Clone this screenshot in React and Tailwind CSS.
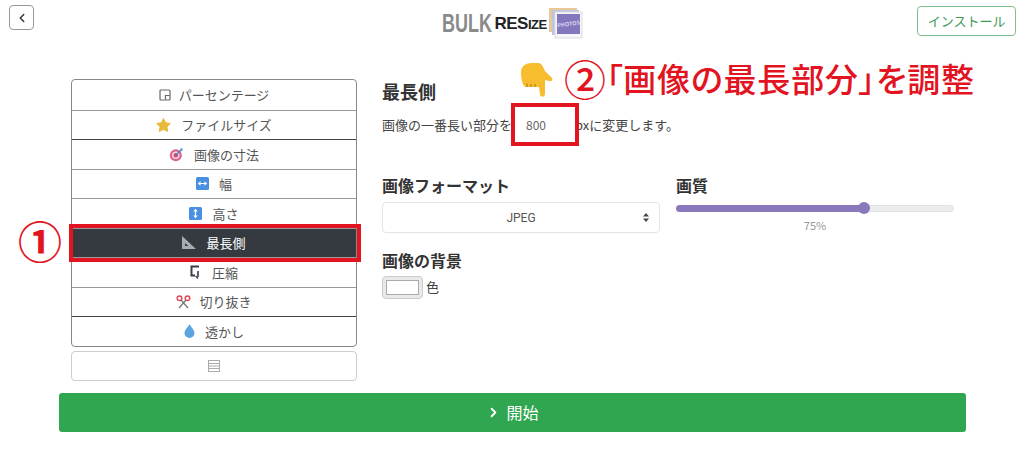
import React from 'react';
import { ChevronLeft, ChevronRight } from 'lucide-react';

const FONT = "font-['Noto_Sans_CJK_JP','Noto_Sans',sans-serif]";

function Percent() {
    return (
        <svg width="12" height="12" viewBox="0 0 12 12" fill="none" stroke="#666" strokeWidth="1.2">
            <rect x="1" y="1" width="10" height="10" rx="1" />
            <path d="M6.5 10.5V6.5H10.5" />
        </svg>
    );
}

function Star() {
    return (
        <svg width="15" height="14" viewBox="0 0 16 15">
            <path d="M8 .5l2.300 4.600 5 .7-3.600 3.600.9 5.100L8 12.200l-4.600 2.300.9-5.100L.7 5.800l5-.7z" fill="#e8b93a" stroke="#e8b93a" strokeLinejoin="round" />
        </svg>
    );
}

function Target() {
    return (
        <svg width="15" height="15" viewBox="0 0 15 15">
            <circle cx="6.800" cy="8.200" r="6" fill="#d9648f" />
            <circle cx="6.800" cy="8.200" r="3.800" fill="#f3d5e0" />
            <circle cx="6.800" cy="8.200" r="2.200" fill="#c9487a" />
            <path d="M7 8L12 3" stroke="#4d7fb8" strokeWidth="1.3" />
            <path d="M11 1.200l3 .6-1.500 2.800z" fill="#4a90e2" />
        </svg>
    );
}

function BlueBox({ vertical }) {
    return (
        <svg width="13" height="13" viewBox="0 0 13 13">
            <rect width="13" height="13" rx="1.5" fill="#4a90e2" />
            <g transform={vertical ? 'rotate(90 6.5 6.5)' : undefined} fill="#fff" stroke="#fff">
                <path d="M4 6.500h5" strokeWidth="1.2" />
                <path d="M1.800 6.500L4.500 4.300v4.400zM11.200 6.500L8.500 4.300v4.400z" stroke="none" />
            </g>
        </svg>
    );
}

function SetSquare() {
    return (
        <svg width="14" height="13" viewBox="0 0 14 13">
            <path fillRule="evenodd" d="M0 0L14 13H0zM3 7v3h3.400z" fill="#a9abb2" />
        </svg>
    );
}

function Compress() {
    return (
        <svg width="10" height="14" viewBox="0 0 10 14" fill="none" stroke="#3a3d48" strokeWidth="2">
            <path d="M9 1.500H1.500v9H5" />
            <path d="M8 6v6" strokeWidth="1.6" />
            <path d="M5.500 11l2.500 2.500" strokeWidth="1.2" />
        </svg>
    );
}

function Scissors() {
    return (
        <svg width="15" height="14" viewBox="0 0 15 14" fill="none" stroke="#dd4a58" strokeWidth="1.5">
            <circle cx="3.500" cy="3.200" r="2.300" />
            <circle cx="11.500" cy="3.200" r="2.300" />
            <path d="M5 5l7 8M10 5l-7 8" stroke="#777" strokeWidth="1.3" />
        </svg>
    );
}

function Drop() {
    return (
        <svg width="11" height="14" viewBox="0 0 11 14">
            <path d="M5.500 0C4 3 .5 6 .5 9a5 5 0 0 0 10 0c0-3-3.500-6-5-9z" fill="#5aa5e0" />
        </svg>
    );
}

function Rows() {
    return (
        <svg width="12" height="12" viewBox="0 0 12 12" fill="none" stroke="#aaa">
            <rect x=".5" y=".5" width="11" height="11" />
            <path d="M.5 3.500h11M.5 6h11M.5 8.500h11" />
        </svg>
    );
}

function Hand() {
    return (
        <svg width="34" height="36" viewBox="0 0 34 36">
            <path d="M1 10C1 4 6 1 12 1h6c4 0 5 4 7 8l6 6c2.500 2 1.500 5-2 4l-4-1v14c0 3.500-5 3.500-5 0l-1-7H5C2 22 1 16 1 10z" fill="#f7bd2e" />
            <path d="M7 21.500v3.500M11 22v3M15 22v3" stroke="#b07a10" strokeWidth="1" />
        </svg>
    );
}

function LogoPhotos() {
    return (
        <svg width="34" height="31" viewBox="0 0 34 31">
            <rect x="0" y="0" width="28" height="24" fill="#e9c796" />
            <rect x="3" y="2" width="27" height="25" fill="#b9c6e0" />
            <rect x="6" y="4" width="27" height="26" fill="#f6f6fa" stroke="#ddd" />
            <rect x="8" y="6" width="23" height="20" fill="#8577bd" />
            <text x="19.500" y="18" textAnchor="middle" fontSize="5.500" fontWeight="700" fill="#d8d4ee" transform="rotate(-8 19.500 16)">PHOTOS</text>
        </svg>
    );
}

const items = [
    { label: 'パーセンテージ', icon: <Percent />, gap: 'gap-2' },
    { label: 'ファイルサイズ', icon: <Star />, gap: 'gap-2.5' },
    { label: '画像の寸法', icon: <Target />, gap: 'gap-2.5', dark: true },
    { label: '幅', icon: <BlueBox />, gap: 'gap-2.5' },
    { label: '高さ', icon: <BlueBox vertical />, gap: 'gap-2.5' },
    { label: '最長側', icon: <SetSquare />, gap: 'gap-2.5', active: true },
    { label: '圧縮', icon: <Compress />, gap: 'gap-3' },
    { label: '切り抜き', icon: <Scissors />, gap: 'gap-2' },
    { label: '透かし', icon: <Drop />, gap: 'gap-2.5', dark: true },
];

export default function App() {
    return (
        <div className={`relative w-[1024px] h-[453px] overflow-hidden bg-white text-[#444] ${FONT}`}>
            {/* Header */}
            <header className="flex items-start h-[79px] pl-[9px] pr-2 pt-[5px]">
                <div className="flex-1">
                    <button className="flex items-center justify-center w-[25px] h-[25px] rounded border border-[#999] text-[#333]">
                        <ChevronLeft size={14} strokeWidth={2.5} />
                    </button>
                </div>
                <div className="flex items-center h-[38px] -mt-px">
                    <span className="w-[49px] origin-left scale-x-[0.72] font-['Liberation_Sans',sans-serif] font-bold text-[25px] leading-none text-[#8a8a8a]">BULK</span>
                    <span className="ml-[3px] font-['Liberation_Sans',sans-serif] font-bold text-[17px] leading-none text-[#222] tracking-[-0.5px]">RES</span>
                    <span className="font-['Liberation_Sans',sans-serif] font-bold text-[13px] leading-none text-[#222] tracking-[-0.5px] mt-[3px]">IZE</span>
                    <span className="ml-[2px]"><LogoPhotos /></span>
                </div>
                <div className="flex-1 flex justify-end">
                    <button className="mt-px w-[99px] h-[30px] rounded border border-[#7fbf8e] text-[13px] text-[#3c9a55]">インストール</button>
                </div>
            </header>

            {/* Main */}
            <main className="flex pl-[71px]">
                <div className="w-[286px] shrink-0">
                    <div className="rounded border border-[#888] overflow-hidden">
                        {items.map((item, i) => (
                            <div
                                key={item.label}
                                className={`flex items-center justify-center h-[29.5px] text-[13px] ${item.gap} ${i > 0 ? 'border-t' : ''} ${item.dark ? 'border-[#444]' : 'border-[#999]'} ${item.active ? 'bg-[#343a40] text-white' : 'text-[#555]'}`}
                            >
                                {item.icon}
                                <span>{item.label}</span>
                            </div>
                        ))}
                    </div>
                    <div className="flex items-center justify-center h-[30px] mt-[4px] rounded border border-[#ccc]">
                        <Rows />
                    </div>
                </div>

                <div className="ml-[25px] w-[572px]">
                    <h2 className="text-[18px] leading-[24px] font-bold text-[#333]">最長側</h2>
                    <div className="flex items-center mt-[11px] h-[22px] text-[13px] whitespace-nowrap">
                        <span>画像の一番長い部分を</span>
                        <span className="w-[63px] h-[32px] pl-[14px] flex items-center text-[12px] text-[#666] shrink-0">800</span>
                        <span>pxに変更します。</span>
                    </div>

                    <div className="flex gap-4 mt-[38px]">
                        <div className="w-[278px]">
                            <h3 className="text-[16px] leading-[22px] font-bold text-[#333]">画像フォーマット</h3>
                            <div className="relative flex items-center justify-center h-[31px] mt-[6px] rounded border border-[#e4e4e4] font-['Roboto',sans-serif] text-[12px] text-[#555]">
                                JPEG
                                <svg className="absolute right-[10px]" width="6" height="9" viewBox="0 0 6 9" fill="#444">
                                    <path d="M3 0l3 3.500H0zM3 9L0 5.500h6z" />
                                </svg>
                            </div>
                        </div>
                        <div className="w-[278px]">
                            <h3 className="text-[16px] leading-[22px] font-bold text-[#333]">画質</h3>
                            <div className="flex items-center h-[12px] mt-[6px]">
                                <div className="relative w-[188px] h-[7px] rounded-l-full bg-[#8a78bd]">
                                    <div className="absolute right-[-6px] top-[-2.5px] w-[12px] h-[12px] rounded-full bg-[#8a78bd]" />
                                </div>
                                <div className="flex-1 h-[7px] rounded-r-full bg-[#ececec] border border-[#e2e2e2]" />
                            </div>
                            <p className="mt-[3px] text-center text-[11px] text-[#999]">75%</p>
                        </div>
                    </div>

                    <h3 className="mt-[15px] text-[16px] leading-[22px] font-bold text-[#333]">画像の背景</h3>
                    <div className="flex items-center gap-[3px] mt-[5px] text-[13px]">
                        <div className="w-[41px] h-[23px] p-[3px] rounded-sm border border-[#ccc] bg-[#e9e9e9]">
                            <div className="w-full h-full bg-white border border-[#aaa]" />
                        </div>
                        <span>色</span>
                    </div>
                </div>
            </main>

            {/* Start button */}
            <div className="pl-[59px] mt-[12px]">
                <button className="flex items-center justify-center gap-[5px] w-[907px] h-[39px] rounded-[3px] bg-[#2fa64f] text-white text-[16px]">
                    <ChevronRight size={15} strokeWidth={3} />
                    <span>開始</span>
                </button>
            </div>

            {/* Red annotations over the screenshot */}
            <div className="absolute left-[69px] top-[224px] w-[292px] h-[38px] border-4 border-[#e1141f]" />
            <div className="absolute left-[511px] top-[103px] w-[68px] h-[43px] border-4 border-[#e1141f]" />
            <div className="absolute left-[16px] top-[216px] w-[48px] h-[48px] flex items-center justify-center text-[44px] leading-none font-bold text-[#e1141f]">①</div>
            <div className="absolute left-[520px] top-[62px]"><Hand /></div>
            <div className="absolute left-[564px] top-[55px] flex items-center h-[46px] whitespace-nowrap font-medium text-[#e1141f]">
                <span className="text-[42px] leading-none">②</span>
                <span className="text-[33px] leading-none [font-feature-settings:'palt'] tracking-[0.8px]">「画像の最長部分」を調整</span>
            </div>
        </div>
    );
}
